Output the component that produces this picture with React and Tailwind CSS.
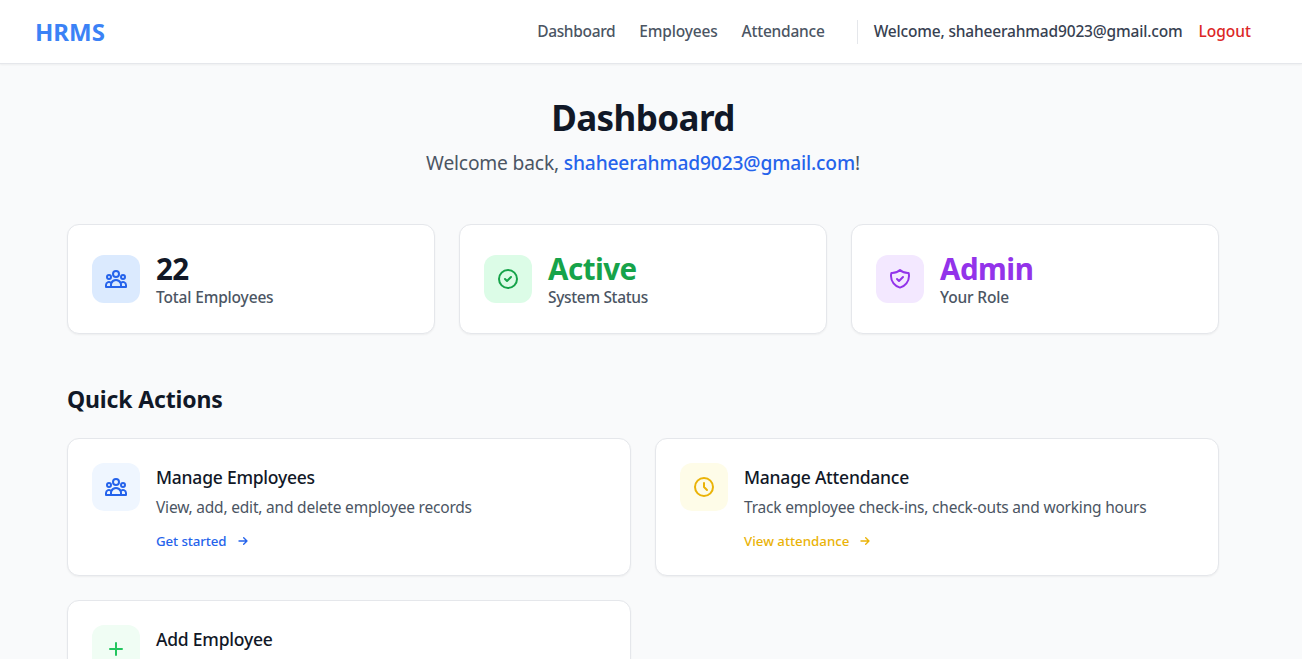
const ICONS = {
  users:
    'M17 20h5v-2a3 3 0 00-5.356-1.857M17 20H7m10 0v-2c0-.656-.126-1.283-.356-1.857M7 20H2v-2a3 3 0 015.356-1.857M7 20v-2c0-.656.126-1.283.356-1.857m0 0a5.002 5.002 0 019.288 0M15 7a3 3 0 11-6 0 3 3 0 016 0zm6 3a2 2 0 11-4 0 2 2 0 014 0zM7 10a2 2 0 11-4 0 2 2 0 014 0z',
  check: 'M9 12l2 2 4-4m6 2a9 9 0 11-18 0 9 9 0 0118 0z',
  shield:
    'M9 12l2 2 4-4m5.618-4.016A11.955 11.955 0 0112 2.944a11.955 11.955 0 01-8.618 3.04A12.02 12.02 0 003 9c0 5.591 3.824 10.29 9 11.622 5.176-1.332 9-6.03 9-11.622 0-1.042-.133-2.052-.382-3.016z',
  clock: 'M12 8v4l3 3m6-3a9 9 0 11-18 0 9 9 0 0118 0z',
  plus: 'M12 6v6m0 0v6m0-6h6m-6 0H6',
  arrow: 'M13 7l5 5m0 0l-5 5m5-5H6',
};

function Icon({ name, className }) {
  return (
    <svg className={className} fill="none" stroke="currentColor" strokeWidth="2" strokeLinecap="round" strokeLinejoin="round" viewBox="0 0 24 24">
      <path d={ICONS[name]} />
    </svg>
  );
}

const STATS = [
  { icon: 'users', box: 'bg-[#dbeafe] text-[#2563eb]', value: '22', valueClass: 'text-[#111827]', label: 'Total Employees', labelClass: 'tracking-[-0.16px]' },
  { icon: 'check', box: 'bg-[#dcfce7] text-[#16a34a]', value: 'Active', valueClass: 'text-[#16a34a]', label: 'System Status', labelClass: 'tracking-[-0.34px]' },
  { icon: 'shield', box: 'bg-[#f3e8ff] text-[#9333ea]', value: 'Admin', valueClass: 'text-[#9333ea]', label: 'Your Role', labelClass: 'tracking-[-0.15px]' },
];

const ACTIONS = [
  { icon: 'users', box: 'bg-[#eff6ff] text-[#2563eb]', title: 'Manage Employees', text: 'View, add, edit, and delete employee records', link: 'Get started', linkClass: 'text-[#2563eb] tracking-[-0.1px]' },
  { icon: 'clock', box: 'bg-[#fefce8] text-[#eab308]', title: 'Manage Attendance', text: 'Track employee check-ins, check-outs and working hours', link: 'View attendance', linkClass: 'text-[#eab308]' },
  { icon: 'plus', box: 'bg-[#f0fdf4] text-[#22c55e]', title: 'Add Employee' },
];

const CARD = 'rounded-xl border border-[#e5e7eb] bg-white shadow-[0_1px_2px_0_rgba(0,0,0,0.05)]';

export default function App() {
  return (
    <div className="h-[659px] overflow-hidden bg-[#f9fafb] font-['Noto_Sans',sans-serif] text-[#111827]">
      <header className="h-16 border-b border-[#e5e7eb] bg-white shadow-[0_1px_2px_0_rgba(0,0,0,0.05)]">
        <div className="w-[1286px]">
          <div className="mx-auto flex h-[63px] max-w-7xl items-center justify-between px-8">
            <span className="text-2xl font-bold text-[#3b82f6]">HRMS</span>
            <nav className="flex items-center text-[15.5px] font-medium whitespace-nowrap text-[#4b5563]">
              <a className="mr-6 tracking-[-0.34px]">Dashboard</a>
              <a className="mr-6 tracking-[-0.18px]">Employees</a>
              <a className="mr-8 tracking-[-0.22px]">Attendance</a>
              <div className="flex h-6 items-center gap-4 border-l border-[#e5e7eb] pl-4">
                <span className="tracking-[-0.17px] text-[#374151]">Welcome, shaheerahmad9023@gmail.com</span>
                <button className="text-[#dc2626]">Logout</button>
              </div>
            </nav>
          </div>
        </div>
      </header>
      <main className="w-[1286px]">
        <div className="mx-auto max-w-6xl pt-[33px]">
          <div className="mb-[45px] text-center">
            <h1 className="mb-[9px] text-[35px] leading-[41px] font-bold tracking-[-0.6px]">Dashboard</h1>
            <p className="text-[19.2px] leading-8 tracking-[-0.16px] text-[#4b5563]">
              <span>Welcome back, </span>
              <span className="font-medium text-[#2563eb]">shaheerahmad9023@gmail.com</span>!
            </p>
          </div>
          <div className="mb-[49px] grid grid-cols-3 gap-6">
            {STATS.map((s) => (
              <section key={s.label} className={`${CARD} flex h-[110px] items-center gap-4 px-6`}>
                <div className={`flex size-12 items-center justify-center rounded-xl ${s.box}`}>
                  <Icon name={s.icon} className="size-6" />
                </div>
                <div>
                  <p className={`pt-1 text-[29.5px] leading-8 font-bold tracking-[-0.5px] ${s.valueClass}`}>{s.value}</p>
                  <p className={`text-[15.5px] leading-6 font-medium text-[#4b5563] ${s.labelClass}`}>{s.label}</p>
                </div>
              </section>
            ))}
          </div>
          <h2 className="mb-[23px] text-[23px] leading-8 font-bold tracking-[-0.15px]">Quick Actions</h2>
          <div className="grid grid-cols-2 gap-6">
            {ACTIONS.map((a) => (
              <section key={a.title} className={`${CARD} flex h-[138px] gap-4 p-6`}>
                <div className={`flex size-12 shrink-0 items-center justify-center rounded-xl ${a.box}`}>
                  <Icon name={a.icon} className="size-6" />
                </div>
                <div className="whitespace-nowrap">
                  <h3 className="mb-1 text-[17.5px] leading-7 font-medium tracking-[-0.23px]">{a.title}</h3>
                  {a.text && <p className="text-[15.5px] leading-6 tracking-[-0.2px] text-[#4b5563]">{a.text}</p>}
                  {a.link && (
                    <div className={`mt-3 flex items-center text-[13.3px] leading-5 font-medium ${a.linkClass}`}>
                      <span>{a.link}</span>
                      <Icon name="arrow" className="ml-2 size-4" />
                    </div>
                  )}
                </div>
              </section>
            ))}
          </div>
        </div>
      </main>
    </div>
  );
}
